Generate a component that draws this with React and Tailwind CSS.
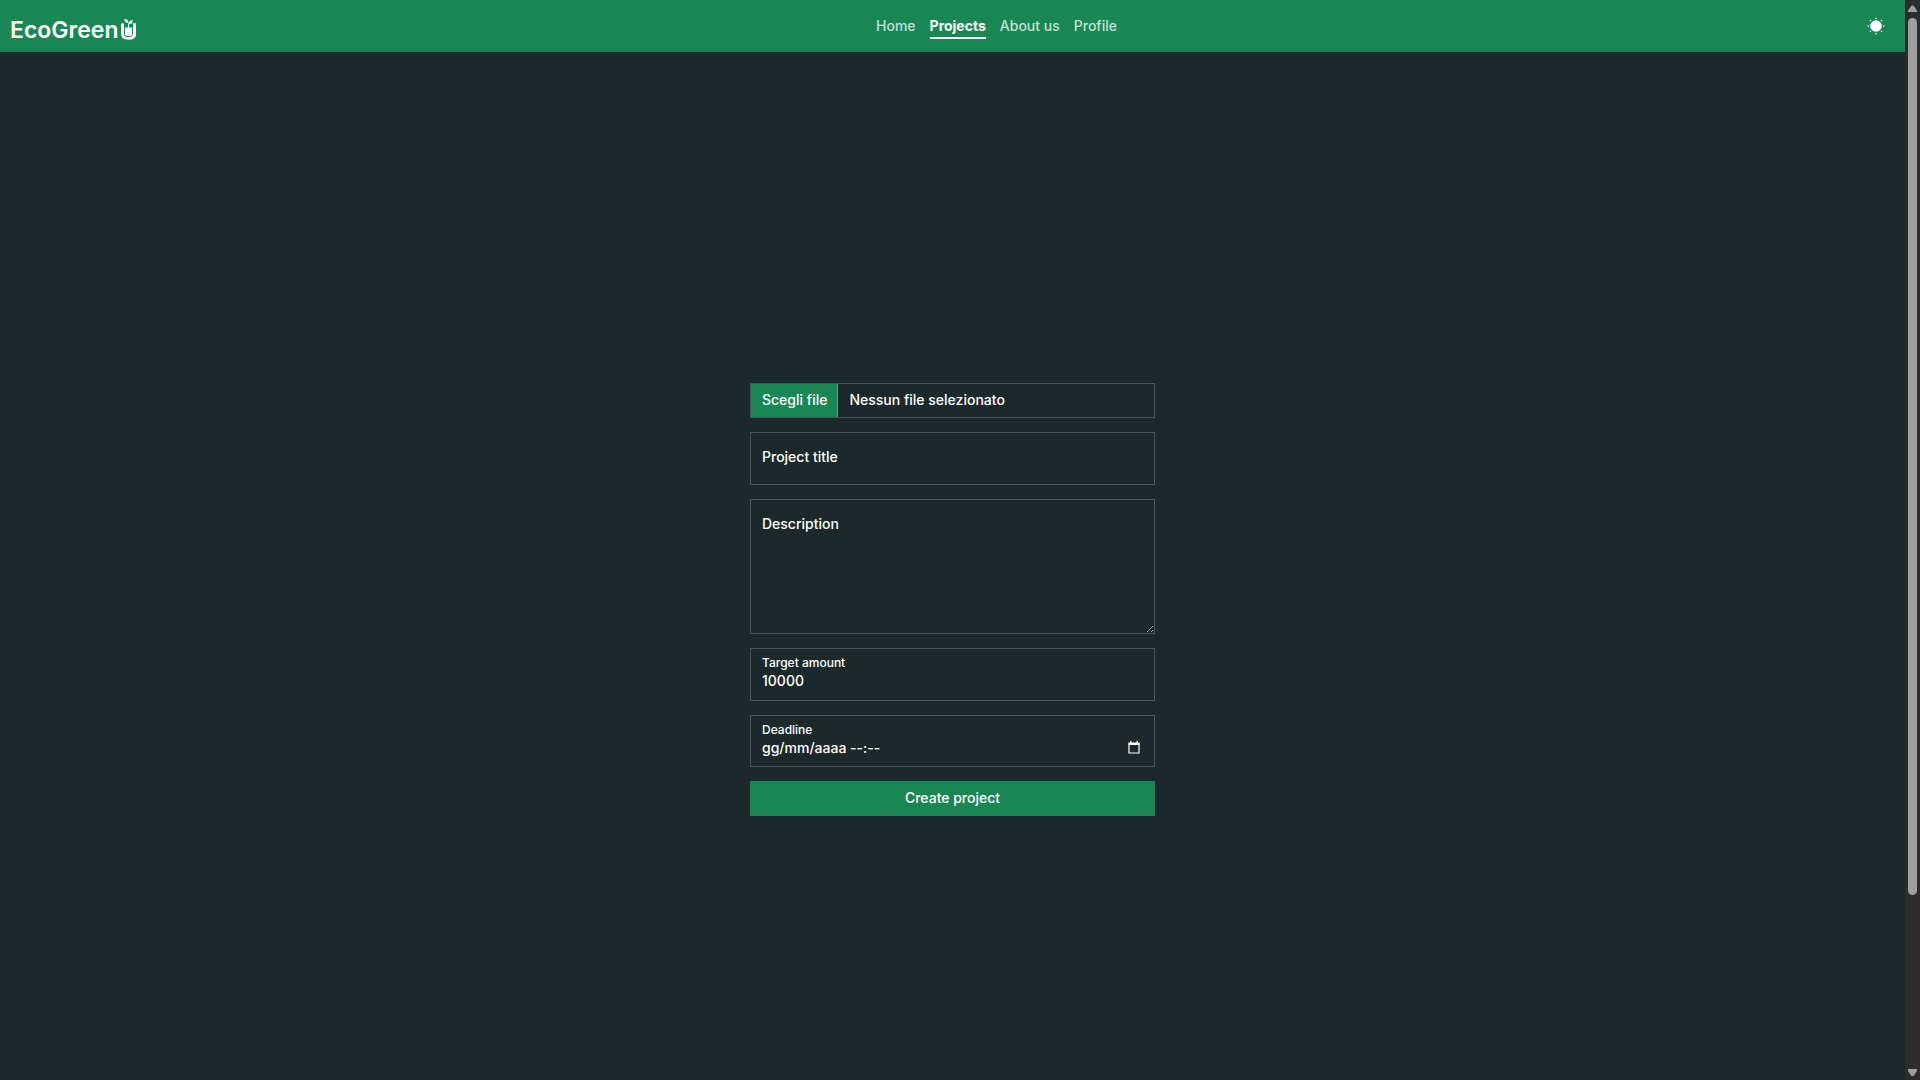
import React from "react";

const field = "block w-full border border-[#495656] bg-transparent px-[11px] text-white outline-none";

function LogoMark() {
  return (
    <svg viewBox="0 0 15 22" className="h-[22px] w-[15px]" aria-hidden="true">
      <path d="M0 5.500h3V15.500q0 3.500 3.500 3.500h2q3.500 0 3.500-3.500V5.500h3v9.500q0 6.500-6 6.500H6q-6 0-6-6.500Z" fill="#fff" />
      <path d="M4 9.500h7V15.500q0 2.500-2.500 2.500h-2q-2.500 0-2.500-2.500Z" fill="#fff" />
      <path d="M7.500 9.500V5" stroke="#fff" strokeWidth="1" />
      <path d="M7.300 4.800C4.900 5 3.400 3.400 3.300.900 5.800.700 7.500 2.200 7.300 4.800Z" fill="#fff" />
      <path d="M7.700 6.400C7.500 3.700 9 2.200 11.700 2.300 11.700 5 10.300 6.500 7.700 6.400Z" fill="#fff" />
      <path d="M12 5.500h3v9.500q0 6.500-6 6.500H7.500V19h1q3.500 0 3.500-3.500Z" fill="#fff" />
    </svg>
  );
}

function SunIcon() {
  return (
    <svg viewBox="0 0 18 18" className="size-[18px]" fill="#fff" aria-hidden="true">
      <circle cx="9" cy="9" r="5.8" />
      <circle cx="9" cy="1.200" r="0.800" />
      <circle cx="9" cy="16.800" r="0.800" />
      <circle cx="1.200" cy="9" r="0.800" />
      <circle cx="16.800" cy="9" r="0.800" />
      <circle cx="3.500" cy="3.500" r="0.800" />
      <circle cx="14.500" cy="3.500" r="0.800" />
      <circle cx="3.500" cy="14.500" r="0.800" />
      <circle cx="14.500" cy="14.500" r="0.800" />
    </svg>
  );
}

function CalendarIcon() {
  return (
    <svg viewBox="0 0 12 13" className="h-[13px] w-3" aria-hidden="true">
      <path d="M1 3v9h10V3" fill="none" stroke="#fff" strokeWidth="1.200" />
      <path d="M0.400 1.500h11.200V4H0.400ZM2 0h1.500v2H2ZM8.500 0H10v2H8.500Z" fill="#fff" />
    </svg>
  );
}

function ScrollRail() {
  return (
    <div className="flex h-full w-[15px] shrink-0 flex-col items-center bg-[#2c2c2c]" aria-hidden="true">
      <svg viewBox="0 0 15 18" className="h-[18px] w-full shrink-0" fill="#9f9f9f">
        <path d="M6.500 5.500h2l3.500 5v1.500H3v-1.500Z" />
      </svg>
      <div className="w-[9px] grow-84 basis-0 rounded-full bg-[#9f9f9f]" />
      <div className="grow-16 basis-0" />
      <svg viewBox="0 0 15 18" className="h-[18px] w-full shrink-0" fill="#9f9f9f">
        <path d="M6.500 14h2l3.500-5V7H3v2Z" />
      </svg>
    </div>
  );
}

export default function App() {
  return (
    <div className="flex h-screen overflow-hidden bg-[#1c292a] font-['Inter',sans-serif] text-sm text-white">
      <div className="flex min-w-0 flex-1 flex-col">
        <header className="grid h-[52px] shrink-0 grid-cols-[1fr_auto_1fr] items-center bg-[#198754]">
          <a href="#home" className="ml-[10px] flex items-end gap-[3px] pt-2 text-[23px] leading-7 font-semibold">
            <span>EcoGreen</span>
            <span className="pb-1"><LogoMark /></span>
          </a>
          <nav className="ml-[88px] flex gap-[14px] font-medium text-[#c5e1d4]">
            <a href="#home" className="border-b-2 border-transparent leading-[23px]">Home</a>
            <a href="#projects" aria-current="page" className="border-b-2 border-white leading-[23px] font-bold text-white">Projects</a>
            <a href="#about" className="border-b-2 border-transparent leading-[23px]">About us</a>
            <a href="#profile" className="border-b-2 border-transparent leading-[23px]">Profile</a>
          </nav>
          <button type="button" aria-label="Toggle theme" className="mr-5 justify-self-end">
            <SunIcon />
          </button>
        </header>

        <main className="flex flex-1 flex-col items-center justify-center pt-[66px]">
          <form className="flex w-full max-w-[405px] flex-col gap-[14px] font-medium">
            <label className="flex h-[35px] cursor-pointer items-stretch border border-[#495656]">
              <input type="file" className="sr-only" />
              <span className="flex items-center border-r border-[#5a9a7a] bg-[#198754] pr-[10px] pl-[11px]">Scegli file</span>
              <span className="flex items-center px-[11px]">Nessun file selezionato</span>
            </label>
            <input aria-label="Project title" placeholder="Project title" className={`${field} h-[53px] pb-[3px] placeholder:text-white`} />
            <textarea aria-label="Description" placeholder="Description" className={`${field} h-[135px] resize pt-[14px] scheme-dark placeholder:text-white`} />
            <div className="flex h-[53px] flex-col border border-[#495656] px-[11px] pt-[6px]">
              <label htmlFor="amount" className="text-xs leading-4">Target amount</label>
              <input id="amount" defaultValue="10000" className="w-full bg-transparent leading-5 outline-none" />
            </div>
            <div className="flex h-[52px] flex-col border border-[#495656] px-[11px] pt-[6px]">
              <label htmlFor="deadline" className="text-xs leading-4">Deadline</label>
              <div className="flex items-center pr-[3px]">
                <input id="deadline" defaultValue="gg/mm/aaaa --:--" className="min-w-0 flex-1 bg-transparent leading-5 outline-none" />
                <button type="button" aria-label="Open calendar"><CalendarIcon /></button>
              </div>
            </div>
            <button type="submit" className="h-[35px] bg-[#198754]">Create project</button>
          </form>
        </main>
      </div>
      <ScrollRail />
    </div>
  );
}
